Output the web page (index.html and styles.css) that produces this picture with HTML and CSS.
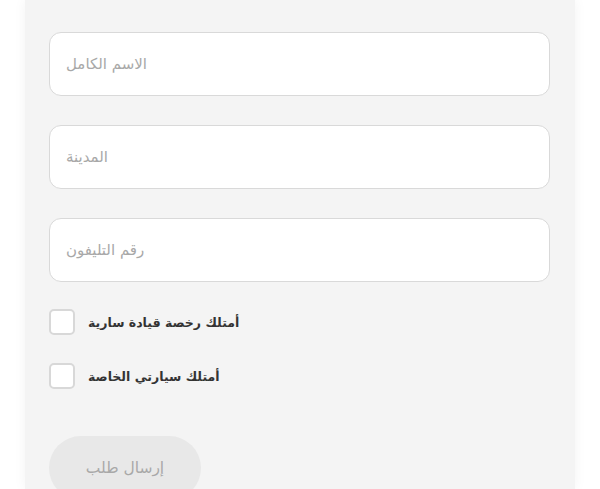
FILE: index.html
```html
<!DOCTYPE html>
<html lang="ar">
<head>
<meta charset="utf-8">
<link rel="stylesheet" href="styles.css">
</head>
<body>
<div class="card">
  <form class="form">
    <input class="field" type="text" placeholder="الاسم الكامل">
    <input class="field" type="text" placeholder="المدينة">
    <input class="field" type="text" placeholder="رقم التليفون">
    <div class="checks">
      <label class="check"><span class="box"></span><span class="label">أمتلك رخصة قيادة سارية</span></label>
      <label class="check"><span class="box"></span><span class="label">أمتلك سيارتي الخاصة</span></label>
    </div>
    <button class="submit" type="button">إرسال طلب</button>
  </form>
</div>
</body>
</html>
```
FILE: styles.css
```css
html, body {
  margin: 0;
  padding: 0;
  background: #ffffff;
  font-family: "DejaVu Sans", "Liberation Sans", sans-serif;
  overflow: hidden;
}
.card {
  margin-left: 25px;
  width: 550px;
  height: 489px;
  overflow: hidden;
  box-sizing: border-box;
  background: #f4f4f4;
  box-shadow: 0 0 12px rgba(0, 0, 0, 0.05);
  padding: 32px 25px 0 24px;
}
.form {
  display: flex;
  flex-direction: column;
  align-items: stretch;
}
.field {
  display: block;
  height: 64px;
  box-sizing: border-box;
  margin: 0 0 29px 0;
  border: 1px solid #d9d9d9;
  border-radius: 12px;
  background: #ffffff;
  padding: 0 16px;
  font-family: "DejaVu Sans", sans-serif;
  font-size: 15px;
  color: #333;
  outline: none;
}
.field:last-of-type { margin-bottom: 0; }
.field::placeholder { color: #a8a8a8; }
.checks {
  margin-top: 27px;
  display: flex;
  flex-direction: column;
  gap: 28px;
}
.check {
  display: flex;
  align-items: center;
  gap: 13px;
}
.box {
  width: 26px;
  height: 26px;
  box-sizing: border-box;
  border: 2px solid #d8d8d8;
  border-radius: 5px;
  background: #ffffff;
}
.label {
  font-size: 12.5px;
  font-weight: bold;
  color: #333333;
}
.submit {
  align-self: flex-start;
  margin-top: 47px;
  width: 152px;
  height: 64px;
  flex-shrink: 0;
  border: none;
  border-radius: 32px;
  background: #e8e8e8;
  color: #a8a8a8;
  font-family: "DejaVu Sans", sans-serif;
  font-size: 15.5px;
}
```
